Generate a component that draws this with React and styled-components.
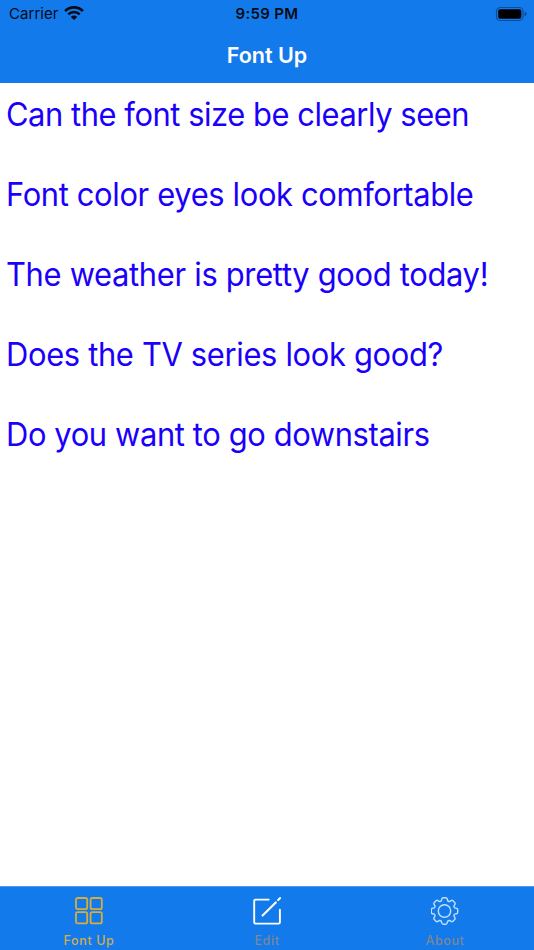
import React, { useState } from "react";
import styled, { createGlobalStyle } from "styled-components";

const GlobalStyle = createGlobalStyle`
  * {
    box-sizing: border-box;
  }
  body {
    margin: 0;
    font-family: Inter, "Liberation Sans", sans-serif;
    background-color: #ffffff;
  }
`;
const Screen = styled.div`
  height: 100vh;
  display: flex;
  flex-direction: column;
  overflow: hidden;
`;
const Header = styled.header`
  height: 83px;
  flex-shrink: 0;
  background-color: #137aec;
`;
const StatusBar = styled.div`
  height: 27px;
  padding: 0 7px 0 9px;
  display: grid;
  grid-template-columns: 1fr auto 1fr;
  align-items: center;
  color: #050b14;
`;
const Carrier = styled.div`
  display: flex;
  align-items: center;
  gap: 5px;
  font-size: 15px;
  letter-spacing: 0.05px;

  svg {
    margin-bottom: 2px;
  }
`;
const Time = styled.div`
  margin-right: 2px;
  font-size: 15px;
  font-weight: 600;
  letter-spacing: 0.3px;
`;
const Battery = styled.div`
  display: flex;
  justify-content: flex-end;
`;
const Title = styled.h1`
  margin: 0;
  height: 56px;
  line-height: 56px;
  text-align: center;
  color: #ffffff;
  font-size: 21.5px;
  font-weight: 600;
`;
const Lines = styled.ul`
  flex: 1;
  margin: 0;
  padding: 0 6px;
  list-style: none;
`;
const Line = styled.li`
  height: 80px;
  line-height: 63px;
  color: #1a00fa;
  font-size: 32px;
  letter-spacing: ${(props) => props.$spacing}px;
  white-space: nowrap;
  transform: scaleX(0.965);
  transform-origin: left;
`;
const TabBar = styled.nav`
  height: 64px;
  flex-shrink: 0;
  display: grid;
  grid-template-columns: repeat(3, 1fr);
  background-color: #137aec;
  border-top: 1px solid #4b9af0;
`;
const Tab = styled.button`
  border: 0;
  padding: 10px 0 0;
  background: none;
  display: flex;
  flex-direction: column;
  align-items: center;
  gap: 8px;
  font-family: inherit;
  font-size: 12.5px;
  line-height: 16px;
  font-weight: 500;
  letter-spacing: 0.6px;
  color: ${(props) => (props.$active ? "#d0ad4b" : "#7c8793")};
`;

// outline of an eight toothed wheel centred on 0,0
const gearPath = () => {
  const tooth = [
    [-3.2, -10.2],
    [-2.7, -12],
    [-2.5, -13.2],
    [-1.2, -13.2],
    [1.2, -13.2],
    [2.5, -13.2],
    [2.7, -12],
    [3.2, -10.2],
    [4.2, -8.9],
    [5.4, -9.8],
  ];
  let d = "";
  for (let i = 0; i < 8; i++) {
    const a = (i * Math.PI) / 4;
    const p = tooth.map(([x, y]) =>
      [
        (x * Math.cos(a) - y * Math.sin(a)).toFixed(2),
        (x * Math.sin(a) + y * Math.cos(a)).toFixed(2),
      ].join(" ")
    );
    d += `${i ? "L" : "M"}${p[0]}L${p[1]}Q${p[2]} ${p[3]}L${p[4]}Q${p[5]} ${p[6]}L${p[7]}Q${p[8]} ${p[9]}`;
  }
  return d + "Z";
};

const WifiIcon = () => (
  <svg width="20" height="14" viewBox="0 0 20 14" fill="none" stroke="#050b14">
    <path d="M1.1 5.1a12.7 12.7 0 0 1 17.8 0" strokeWidth="2.7" />
    <path d="M4.3 8.4a8.1 8.1 0 0 1 11.4 0" strokeWidth="2.5" />
    <path d="M6.8 10.9a4.5 4.5 0 0 1 6.4 0L10 14Z" fill="#050b14" stroke="none" />
  </svg>
);

const BatteryIcon = () => (
  <svg width="32" height="16" viewBox="0 0 32 16">
    <rect x="1.5" y="1.5" width="26.5" height="13" rx="3.8" fill="none" stroke="#0d4d94" strokeWidth="1.2" />
    <rect x="3.2" y="3.2" width="23.1" height="9.6" rx="2" fill="#000000" />
    <path d="M29.6 5.7q2 .8 2 2.3t-2 2.3Z" fill="#0d4586" />
  </svg>
);

const GridIcon = () => (
  <svg width="28" height="28" viewBox="0 0 28 28" fill="none" stroke="#d6ad3b" strokeWidth="1.8">
    <rect x="1" y="1" width="11.2" height="11.2" rx="1.7" />
    <rect x="15.6" y="1" width="11.2" height="11.2" rx="1.7" />
    <rect x="1" y="15.2" width="11.2" height="11.2" rx="1.7" />
    <rect x="15.6" y="15.2" width="11.2" height="11.2" rx="1.7" />
  </svg>
);

const EditIcon = () => (
  <svg width="28" height="28" viewBox="0 0 28 28" fill="none" stroke="#ffffff" strokeWidth="1.9" strokeLinecap="round">
    <path d="M15.7 2.6H2.5q-1.3 0-1.3 1.3v21.4q0 1.3 1.3 1.3h23.1q1.3 0 1.3-1.3V12.8" />
    <path d="M9.6 18.6 22.8 5.4M25.2 3l1.8-1.9" strokeWidth="2.1" />
  </svg>
);

const GearIcon = () => (
  <svg width="28" height="28" viewBox="-13.5 -14 28 28" fill="none" stroke="#c2dffb" strokeWidth="1.4" strokeLinejoin="round">
    <path d={gearPath()} />
    <circle r="6.2" />
  </svg>
);

const lines = [
  { text: "Can the font size be clearly seen", spacing: -0.46 },
  { text: "Font color eyes look comfortable", spacing: -0.36 },
  { text: "The weather is pretty good today!", spacing: -0.32 },
  { text: "Does the TV series look good?", spacing: -0.34 },
  { text: "Do you want to go downstairs", spacing: -0.39 },
];

const tabs = [
  { label: "Font Up", Icon: GridIcon },
  { label: "Edit", Icon: EditIcon },
  { label: "About", Icon: GearIcon },
];

export default function App() {
  const [active, setActive] = useState("Font Up");

  return (
    <Screen>
      <GlobalStyle />
      <Header>
        <StatusBar>
          <Carrier>
            Carrier
            <WifiIcon />
          </Carrier>
          <Time>9:59 PM</Time>
          <Battery>
            <BatteryIcon />
          </Battery>
        </StatusBar>
        <Title>Font Up</Title>
      </Header>
      <Lines>
        {lines.map(({ text, spacing }) => (
          <Line key={text} $spacing={spacing}>
            {text}
          </Line>
        ))}
      </Lines>
      <TabBar>
        {tabs.map(({ label, Icon }) => (
          <Tab key={label} $active={label === active} onClick={() => setActive(label)}>
            <Icon />
            {label}
          </Tab>
        ))}
      </TabBar>
    </Screen>
  );
}
